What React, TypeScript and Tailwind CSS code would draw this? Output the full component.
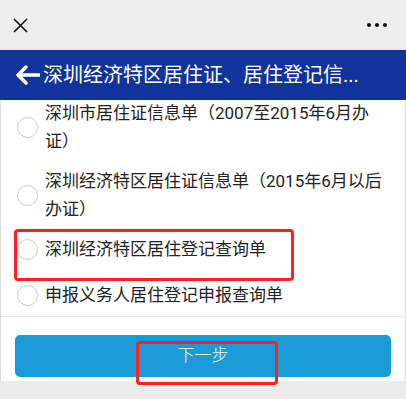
import {useState} from "react";

const options = [
    "深圳市居住证信息单（2007至2015年6月办证）",
    "深圳经济特区居住证信息单（2015年6月以后办证）",
    "深圳经济特区居住登记查询单",
    "申报义务人居住登记申报查询单",
];

const Radio = ({checked}: {checked: boolean}) => (
    <span className="shrink-0 w-[21px] h-[21px] rounded-full border border-[#c9c9c9] bg-white flex items-center justify-center">
        {checked && <span className="w-[11px] h-[11px] rounded-full bg-[#1a9bd7]"/>}
    </span>
);

const App = () => {
    const [selected, setSelected] = useState(-1);

    return (
        <div className="w-[406px] h-[399px] flex flex-col bg-[#ebebeb] overflow-hidden"
             style={{fontFamily: "Roboto, 'Noto Sans CJK SC', sans-serif"}}>
            <div className="h-[50px] shrink-0 bg-[#ededed] flex items-center justify-between pl-[13px] pr-[19px]">
                <svg width="15" height="15" viewBox="0 0 15 15">
                    <path d="M1 1 L14 14 M14 1 L1 14" stroke="#111" strokeWidth="1.6"/>
                </svg>
                <div className="flex gap-[4px]">
                    <span className="w-[4px] h-[4px] rounded-full bg-[#111]"/>
                    <span className="w-[4px] h-[4px] rounded-full bg-[#111]"/>
                    <span className="w-[4px] h-[4px] rounded-full bg-[#111]"/>
                </div>
            </div>

            <div className="h-[50px] shrink-0 bg-[#10349b] flex items-center pl-[15px] text-white">
                <svg width="25" height="22" viewBox="0 0 25 22" className="shrink-0">
                    <path d="M24 11 H4 M11 3 L3 11 L11 19" stroke="#fff" strokeWidth="3.4" fill="none"
                          strokeLinecap="round" strokeLinejoin="round"/>
                </svg>
                <span className="ml-[3px] text-[20px] leading-none whitespace-nowrap">深圳经济特区居住证、居住登记信...</span>
            </div>

            <div className="bg-white border-x border-[#dcdcdc] relative">
                <div className="flex flex-col pb-[7px] border-b border-[#e6e6e6]">
                    {options.map((opt, index) => (
                        <label key={index} onClick={() => setSelected(index)}
                               className={"flex items-center pl-[16px] pr-[20px] cursor-pointer " +
                                   (index === 0 ? "-mt-px" : index === 3 ? "mt-[18px]" : "mt-[12px]")}>
                            <Radio checked={selected === index}/>
                            <span className="ml-[7px] text-[17px] leading-[28px] text-[#222]">{opt}</span>
                        </label>
                    ))}
                </div>
                <div className="px-[14px] pt-[18px] pb-[4px]">
                    <button onClick={() => {}}
                            className="w-full h-[42px] rounded-[5px] bg-[#1a9bd7] text-white text-[17px] font-light">
                        下一步
                    </button>
                </div>

                <div className="absolute left-[13px] top-[129px] w-[280px] h-[52px] border-[3px] border-[#ff2020] rounded-[4px]"/>
                <div className="absolute left-[135px] top-[241px] w-[142px] h-[44px] border-[3px] border-[#ff2020] rounded-[4px]"/>
            </div>

            <div className="flex-1 bg-[#ebebeb]"/>
        </div>
    )
}

export default App;
